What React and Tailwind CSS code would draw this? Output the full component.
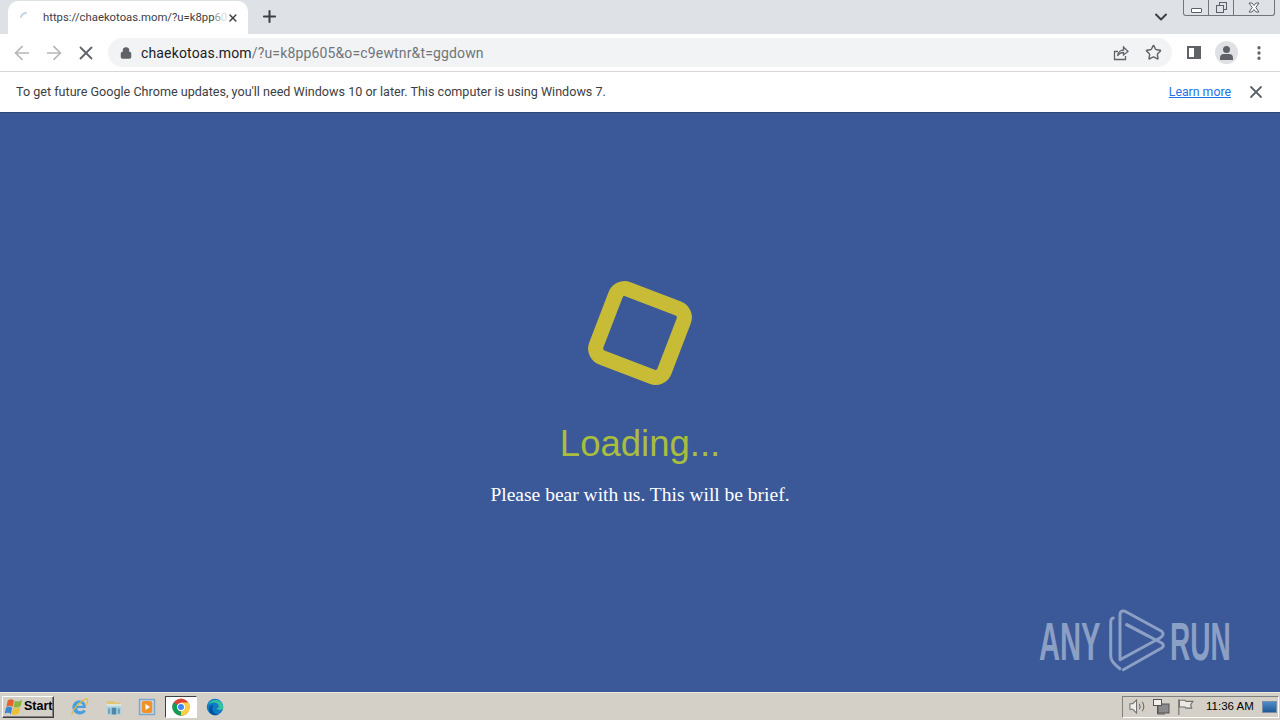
import React from "react";
import { ArrowLeft, ArrowRight, X, Plus, ChevronDown, Lock, Star, MoreVertical } from "lucide-react";

const ChromeLogo = () => (
  <svg width="18" height="18" viewBox="0 0 48 48">
    <circle cx="24" cy="24" r="23" fill="#db4437" />
    <path d="M24 24 L44 35 A23 23 0 0 1 13 44 Z" fill="#0f9d58" />
    <path d="M24 24 L13 44 A23 23 0 0 1 4 12 Z" fill="#0f9d58" />
    <path d="M24 24 L24 47 A23 23 0 0 0 44 12 L24 12 Z" fill="#ffcd40" />
    <circle cx="24" cy="24" r="11" fill="#fff" />
    <circle cx="24" cy="24" r="8" fill="#4285f4" />
  </svg>
);

const EdgeLogo = () => (
  <svg width="18" height="18" viewBox="0 0 24 24">
    <circle cx="12" cy="12" r="11" fill="#0c7cc4" />
    <path d="M3 9c2-6 10-8 15-5 3 2 5 5 5 9 0 2-2 3-5 3-2 0-4-1-4-2 2 0 3-1 3-3 0-3-3-5-6-5-4 0-7 2-8 3z" fill="#35c1a0" />
    <path d="M12 23c-4 0-8-3-8-8 0-3 3-6 6-6-2 2-2 5-1 8 1 3 4 5 8 5-2 1-3 1-5 1z" fill="#0a4f9e" />
  </svg>
);

const IeLogo = () => (
  <svg width="19" height="19" viewBox="0 0 24 24" fill="none">
    <path d="M20 18c-2 3-5 4-8 4-5 0-9-4-9-9s4-9 9-9 8 4 8 9v1H9c0 3 2 4 4 4s3-1 4-2z M9 11h7c0-2-2-3-3.500-3S9 9 9 11z" fill="#4a9fdf" fillRule="evenodd" />
    <path d="M2 22C5 13 14 4 21 2c2 1 2 4-1 8" stroke="#e5bd3d" strokeWidth="1.6" />
  </svg>
);

const FolderLogo = () => (
  <svg width="18" height="18" viewBox="0 0 24 24">
    <path d="M3 4h8l2 2h8v6H3z" fill="#e3c56f" />
    <path d="M2 8h20l-1 14H3z" fill="#a8d0e2" />
    <rect x="2" y="8" width="20" height="3" fill="#d9e6da" />
    <rect x="9" y="13" width="6" height="9" fill="#4f87a6" />
    <rect x="4" y="14" width="3" height="7" fill="#6fa3bf" />
    <rect x="17" y="14" width="3" height="7" fill="#6fa3bf" />
  </svg>
);

const MediaLogo = () => (
  <svg width="18" height="18" viewBox="0 0 24 24">
    <rect x="1" y="1" width="22" height="22" fill="#7fa6cc" />
    <rect x="3" y="3" width="18" height="18" fill="#c9d6e2" />
    <rect x="5" y="4" width="14" height="16" rx="3" fill="#f0922b" />
    <path d="M10 8l6 4-6 4z" fill="#fff" />
  </svg>
);

const WindowsFlag = () => (
  <svg width="18" height="18" viewBox="0 0 20 20">
    <path d="M3 3c2-2 5-2 7 0l-1.500 7c-2-2-5-2-7 0z" fill="#e2632b" />
    <path d="M11 3c2 1 5 1 8-1l-1.500 7c-3 2-6 2-8 1z" fill="#8ab53f" />
    <path d="M1 11c2-2 5-2 7 0l-1.500 7c-2-2-5-2-7 0z" fill="#3f86d0" />
    <path d="M9 11c2 1 5 1 8-1l-1.500 7c-3 2-6 2-8 1z" fill="#efc12f" />
  </svg>
);

const AnyRunPlay = () => (
  <svg width="60" height="66" viewBox="0 0 60 66" fill="none" stroke="#8c9fc4" strokeWidth="3" strokeLinejoin="round" strokeLinecap="round">
    <path d="M5.300 10Q2.700 10 2.700 15V48Q2.700 54 12 60.700" />
    <path d="M12 51.700V6.700Q12 2 17 3.300L53.700 23.300Q57 26.700 52 30L12 51.700" />
    <path d="M18.700 16.700L53.700 35Q57 37.700 53.700 40L15.300 61.700" />
    <path d="M18.700 16.700L40 28" />
  </svg>
);

export default function App() {
  return (
    <div className="w-[1280px] h-[720px] flex flex-col overflow-hidden bg-white font-['Open_Sans',sans-serif]">
      {/* Tab strip */}
      <div className="h-[34px] shrink-0 bg-[#dee1e6] flex items-start relative">
        <div className="ml-[8px] mt-[1px] w-[240px] h-[33px] bg-white rounded-t-[10px] flex items-center pl-[10px] pr-[9px]">
          <svg width="16" height="16" viewBox="0 0 16 16" fill="none" className="shrink-0">
            <path d="M3 7C4 4.500 6 3 8 3" stroke="#c6d3e6" strokeWidth="2" strokeLinecap="round" />
          </svg>
          <span className="ml-[9px] whitespace-nowrap text-[11.300px] leading-none text-[#3c4043] font-['Roboto',sans-serif]">
            https://chaekotoas.mom/?u=k8pp<span className="text-[#9a9da0]">6</span><span className="text-[#dcdde0]">0</span>
          </span>
          <X size={16} strokeWidth={3} className="ml-auto text-[#3c4043]" />
        </div>
        <Plus size={19} strokeWidth={2.6} className="ml-[12px] mt-[7px] text-[#3c4043]" />
        <ChevronDown size={20} strokeWidth={2.4} className="ml-auto mr-[109px] mt-[7px] text-[#3c4043]" />
        {/* window caption buttons */}
        <div className="absolute right-[5px] top-0 w-[92px] h-[16px] flex border border-t-0 border-[#70757c] rounded-b-[3px] bg-[#dee1e6]">
          <div className="w-[25px] flex items-center justify-center border-r border-[#70757c]">
            <div className="w-[11px] h-[5px] mt-[5px] border border-[#5b6068] rounded-[1px] bg-white" />
          </div>
          <div className="w-[25px] flex items-center justify-center border-r border-[#70757c]">
            <svg width="13" height="13" viewBox="0 0 13 13" fill="none" stroke="#5b6068">
              <rect x="4.500" y="1.500" width="7" height="7" />
              <rect x="1.500" y="4.500" width="7" height="7" fill="#dee1e6" />
            </svg>
          </div>
          <div className="flex-1 flex items-center justify-center">
            <svg width="12" height="11" viewBox="0 0 12 11" fill="#fff" stroke="#5b6068">
              <path d="M1 1h3l2 2.500L8 1h3L7.800 5.500 11 10H8L6 7.500 4 10H1l3.200-4.500z" />
            </svg>
          </div>
        </div>
      </div>

      {/* Toolbar */}
      <div className="h-[38px] shrink-0 bg-white border-b border-[#d5d7da] flex items-center">
        <ArrowLeft size={22} strokeWidth={1.8} className="ml-[11px] text-[#b4b6b9]" />
        <ArrowRight size={22} strokeWidth={1.8} className="ml-[10px] text-[#b4b6b9]" />
        <X size={22} strokeWidth={2} className="ml-[10px] text-[#5f6368]" />
        <div className="ml-[11px] w-[1064px] h-[29px] rounded-full bg-[#f1f3f4] flex items-center pl-[12px] pr-[10px]">
          <Lock size={12} strokeWidth={3} fill="#5f6368" className="text-[#5f6368]" />
          <span className="ml-[9px] text-[14px] leading-none text-[#202124] font-['Roboto',sans-serif] tracking-[0.15px]">
            chaekotoas.mom<span className="text-[#70757a]">/?u=k8pp605&amp;o=c9ewtnr&amp;t=ggdown</span>
          </span>
          <svg width="16" height="16" viewBox="0 0 16 16" fill="none" stroke="#5f6368" strokeWidth="1.3" className="ml-auto mr-[16px]">
            <path d="M5 6.500H1.500v8h11V11" />
            <path d="M4.500 11C5 7 8 5 10.500 5V2L15 6.500 10.500 10V7.500C8 7.500 6 8.500 4.500 11z" />
          </svg>
          <Star size={17} strokeWidth={2} className="text-[#5f6368]" />
        </div>
        <div className="ml-[15px] w-[14px] h-[13px] border-2 border-[#5f6368] flex justify-end">
          <div className="w-[5px] h-full bg-[#5f6368]" />
        </div>
        <div className="ml-[14px] w-[23px] h-[23px] rounded-full bg-[#dfe1e5] flex flex-col items-center justify-center overflow-hidden">
          <div className="w-[7px] h-[7px] rounded-full bg-[#5f6368]" />
          <div className="w-[13px] h-[6px] mt-[1px] rounded-t-[4px] bg-[#5f6368]" />
        </div>
        <MoreVertical size={18} strokeWidth={2.4} className="ml-[12px] text-[#5f6368]" />
      </div>

      {/* Update notice */}
      <div className="h-[41px] shrink-0 bg-white flex items-center pl-[16px] pr-[14px] border-b border-[#2f4775] font-['Roboto',sans-serif]">
        <span className="text-[12.600px] leading-none text-[#3c4043]">
          To get future Google Chrome updates, you'll need Windows 10 or later. This computer is using Windows 7.
        </span>
        <a className="ml-auto text-[12.300px] leading-none text-[#1a73e8] underline">Learn more</a>
        <X size={20} strokeWidth={2.2} className="ml-[15px] text-[#5f6368]" />
      </div>

      {/* Page */}
      <div className="flex-1 bg-[#3b5998] relative flex flex-col items-center pt-[176px]">
        <div className="w-[88px] h-[88px] rotate-[21deg] rounded-[17px] border-[15px] border-[#c8bc36]" />
        <p className="mt-[45px] text-[36.500px] leading-[44px] text-[#a9bd3f] font-['Liberation_Sans',sans-serif]">Loading...</p>
        <p className="mt-[17px] text-[19.500px] leading-[24px] text-white font-['Liberation_Serif',serif]">
          Please bear with us. This will be brief.
        </p>
        {/* ANY.RUN watermark */}
        <div className="absolute left-[1039px] top-[495px] flex items-center text-[#8c9fc4] font-['Liberation_Sans',sans-serif] font-bold">
          <span className="w-[69px] text-[54px] leading-none origin-left scale-x-[0.54] whitespace-nowrap">ANY</span>
          <AnyRunPlay />
          <span className="ml-[2px] w-[62px] text-[54px] leading-none origin-left scale-x-[0.52] whitespace-nowrap">RUN</span>
        </div>
      </div>

      {/* Taskbar */}
      <div className="h-[28px] shrink-0 bg-[#d4d0c8] border-t border-[#ece9e2] flex items-center font-['Liberation_Sans',sans-serif]">
        <div className="ml-[2px] w-[52px] h-[22px] flex items-center pl-[2px] gap-[1px] border border-t-white border-l-white border-r-[#404040] border-b-[#404040] shadow-[inset_-1px_-1px_0_#808080]">
          <WindowsFlag />
          <span className="text-[12.500px] font-bold leading-none text-black">Start</span>
        </div>
        <div className="ml-[16px]"><IeLogo /></div>
        <div className="ml-[16px]"><FolderLogo /></div>
        <div className="ml-[15px]"><MediaLogo /></div>
        <div className="ml-[9px] w-[32px] h-[22px] flex items-center justify-center bg-white border border-t-[#404040] border-l-[#404040] border-r-white border-b-white">
          <ChromeLogo />
        </div>
        <div className="ml-[9px]"><EdgeLogo /></div>

        {/* Tray */}
        <div className="ml-auto mr-[1px] w-[157px] h-[22px] flex items-center border border-t-[#808080] border-l-[#808080] border-r-white border-b-white">
          <svg width="17" height="17" viewBox="0 0 18 16" fill="none" stroke="#6f6f6f" strokeWidth="1.100" className="ml-[6px]">
            <path d="M1 5h3l4-4v14l-4-4H1z" fill="#f0eee8" />
            <path d="M11 5c1 2 1 4 0 6M14 3c2 3 2 7 0 10" />
          </svg>
          <svg width="18" height="18" viewBox="0 0 18 18" className="ml-[6px]">
            <rect x="6" y="6" width="11" height="9" fill="#8a8a8a" stroke="#555" />
            <rect x="1.500" y="1.500" width="8" height="6" fill="#f2f0ea" stroke="#555" />
            <path d="M4 2V1M7 2V1M5.500 8v8H13" fill="none" stroke="#555" />
          </svg>
          <svg width="18" height="18" viewBox="0 0 16 16" fill="#ece9e2" stroke="#6f6f6f" className="ml-[6px]">
            <path d="M2.500 1v14" fill="none" />
            <path d="M3 2h5l1 1h6l-2 3 1 3H9L8 8H3z" />
          </svg>
          <span className="ml-[12px] text-[11.500px] leading-none text-black whitespace-nowrap">11:36 AM</span>
          <div className="ml-[8px] w-[15px] h-[12px] border border-[#7a8da8] bg-gradient-to-b from-[#4d8cc8] to-[#1d5a96]" />
        </div>
      </div>
    </div>
  );
}
